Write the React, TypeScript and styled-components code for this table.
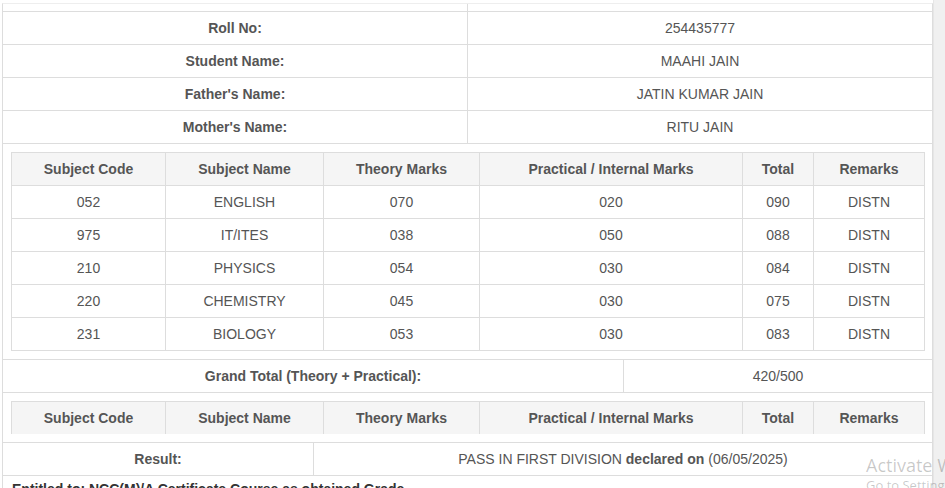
import { FC } from "react";
import styled, { createGlobalStyle } from "styled-components";

const GlobalStyle = createGlobalStyle`
    html, body {
        margin: 0;
        padding: 0;
        overflow: hidden;
        background: #fff;
    }
    body {
        font-family: "Liberation Sans", Arial, sans-serif;
        font-size: 14px;
        color: #555;
    }
`;

interface Subject {
    code: string;
    name: string;
    theory: string;
    practical: string;
    total: string;
    remarks: string;
}

const subjects: Subject[] = [
    { code: "052", name: "ENGLISH", theory: "070", practical: "020", total: "090", remarks: "DISTN" },
    { code: "975", name: "IT/ITES", theory: "038", practical: "050", total: "088", remarks: "DISTN" },
    { code: "210", name: "PHYSICS", theory: "054", practical: "030", total: "084", remarks: "DISTN" },
    { code: "220", name: "CHEMISTRY", theory: "045", practical: "030", total: "075", remarks: "DISTN" },
    { code: "231", name: "BIOLOGY", theory: "053", practical: "030", total: "083", remarks: "DISTN" },
];

const studentInfo = [
    { label: "Roll No:", value: "254435777" },
    { label: "Student Name:", value: "MAAHI JAIN" },
    { label: "Father's Name:", value: "JATIN KUMAR JAIN" },
    { label: "Mother's Name:", value: "RITU JAIN" },
];

const columns = [
    { title: "Subject Code", width: 154 },
    { title: "Subject Name", width: 158 },
    { title: "Theory Marks", width: 156 },
    { title: "Practical / Internal Marks", width: 263 },
    { title: "Total", width: 71 },
    { title: "Remarks", width: 111 },
];

const SubjectHead: FC = () => (
    <>
        <colgroup>
            {columns.map((c) => (
                <col key={c.title} style={{ width: c.width }} />
            ))}
        </colgroup>
        <thead>
            <tr>
                {columns.map((c) => (
                    <HeadCell key={c.title}>{c.title}</HeadCell>
                ))}
            </tr>
        </thead>
    </>
);

export default function App() {
    return (
        <>
            <GlobalStyle />
            <Page>
                <Content>
                    <InfoTable>
                        <tbody>
                            <tr>
                                <TopCell />
                                <TopCell />
                            </tr>
                            {studentInfo.map((row) => (
                                <tr key={row.label}>
                                    <LabelCell>{row.label}</LabelCell>
                                    <ValueCell>{row.value}</ValueCell>
                                </tr>
                            ))}
                        </tbody>
                    </InfoTable>

                    <Section>
                        <MarksTable>
                            <SubjectHead />
                            <tbody>
                                {subjects.map((s) => (
                                    <tr key={s.code}>
                                        <MarkCell>{s.code}</MarkCell>
                                        <MarkCell>{s.name}</MarkCell>
                                        <MarkCell>{s.theory}</MarkCell>
                                        <MarkCell>{s.practical}</MarkCell>
                                        <MarkCell>{s.total}</MarkCell>
                                        <MarkCell>{s.remarks}</MarkCell>
                                    </tr>
                                ))}
                            </tbody>
                        </MarksTable>
                    </Section>

                    <SplitRow $left={620}>
                        <LabelBox>Grand Total (Theory + Practical):</LabelBox>
                        <ValueBox>420/500</ValueBox>
                    </SplitRow>

                    <Section>
                        <MarksTable $open>
                            <SubjectHead />
                        </MarksTable>
                    </Section>

                    <SplitRow $left={310}>
                        <LabelBox>Result:</LabelBox>
                        <ValueBox>
                            PASS IN FIRST DIVISION <b>declared on</b> (06/05/2025)
                        </ValueBox>
                    </SplitRow>

                    <Note>Entitled to: NCC(M)/A Certificate Course as obtained Grade</Note>
                </Content>
                <ScrollTrack />
            </Page>
            <Watermark>
                <WatermarkTitle>Activate Windows</WatermarkTitle>
                <WatermarkSub>Go to Settings to activate Windows.</WatermarkSub>
            </Watermark>
        </>
    );
}

const Page = styled.div`
    display: flex;
    width: 945px;
    height: 488px;
    padding-top: 3px;
    box-sizing: border-box;
`;

const Content = styled.div`
    width: 931px;
    margin-left: 2px;
    border-left: 1px solid #ddd;
    border-right: 1px solid #ddd;
    border-top: 1px solid #eee;
    box-sizing: border-box;
`;

const ScrollTrack = styled.div`
    flex: 1;
    margin-top: -3px;
    background: #f0f0f0;
    border-left: 1px solid #e6e6e6;
`;

const InfoTable = styled.table`
    width: 100%;
    border-collapse: collapse;
    table-layout: fixed;
`;

const TopCell = styled.td`
    height: 7px;
    padding: 0;
    border-bottom: 1px solid #ddd;
    & + & {
        border-left: 1px solid #ddd;
    }
`;

const LabelCell = styled.td`
    padding: 8px;
    line-height: 16px;
    text-align: center;
    font-weight: bold;
    border-bottom: 1px solid #ddd;
`;

const ValueCell = styled.td`
    padding: 8px;
    line-height: 16px;
    text-align: center;
    border-bottom: 1px solid #ddd;
    border-left: 1px solid #ddd;
`;

const Section = styled.div`
    padding: 8px 7px 8px 8px;
    border-bottom: 1px solid #ddd;
`;

const MarksTable = styled.table<{ $open?: boolean }>`
    width: 913px;
    border-collapse: collapse;
    table-layout: fixed;
    border: 1px solid #ddd;
    ${(p) => (p.$open ? "border-bottom: none;" : "")}
`;

const HeadCell = styled.th`
    padding: 8px;
    line-height: 16px;
    text-align: center;
    font-weight: bold;
    background: #f5f5f5;
    border-left: 1px solid #ddd;
    border-right: 1px solid #ddd;
`;

const MarkCell = styled.td`
    padding: 8px;
    line-height: 16px;
    text-align: center;
    border: 1px solid #ddd;
`;

const SplitRow = styled.div<{ $left: number }>`
    display: grid;
    grid-template-columns: ${(p) => p.$left}px 1fr;
    border-bottom: 1px solid #ddd;
`;

const LabelBox = styled.div`
    padding: 8px;
    line-height: 16px;
    text-align: center;
    font-weight: bold;
`;

const ValueBox = styled.div`
    padding: 8px;
    line-height: 16px;
    text-align: center;
    border-left: 1px solid #ddd;

    b {
        font-weight: bold;
    }
`;

const Note = styled.div`
    padding: 5px 9px;
    line-height: 16px;
    font-weight: bold;
    color: #333;
`;

const Watermark = styled.div`
    position: absolute;
    left: 866px;
    top: 453px;
    font-family: "Open Sans", "Noto Sans", sans-serif;
    color: rgba(0, 0, 0, 0.22);
    white-space: nowrap;
    pointer-events: none;
`;

const WatermarkTitle = styled.div`
    font-size: 18px;
    line-height: 24px;
`;

const WatermarkSub = styled.div`
    font-size: 13px;
    line-height: 16px;
`;
